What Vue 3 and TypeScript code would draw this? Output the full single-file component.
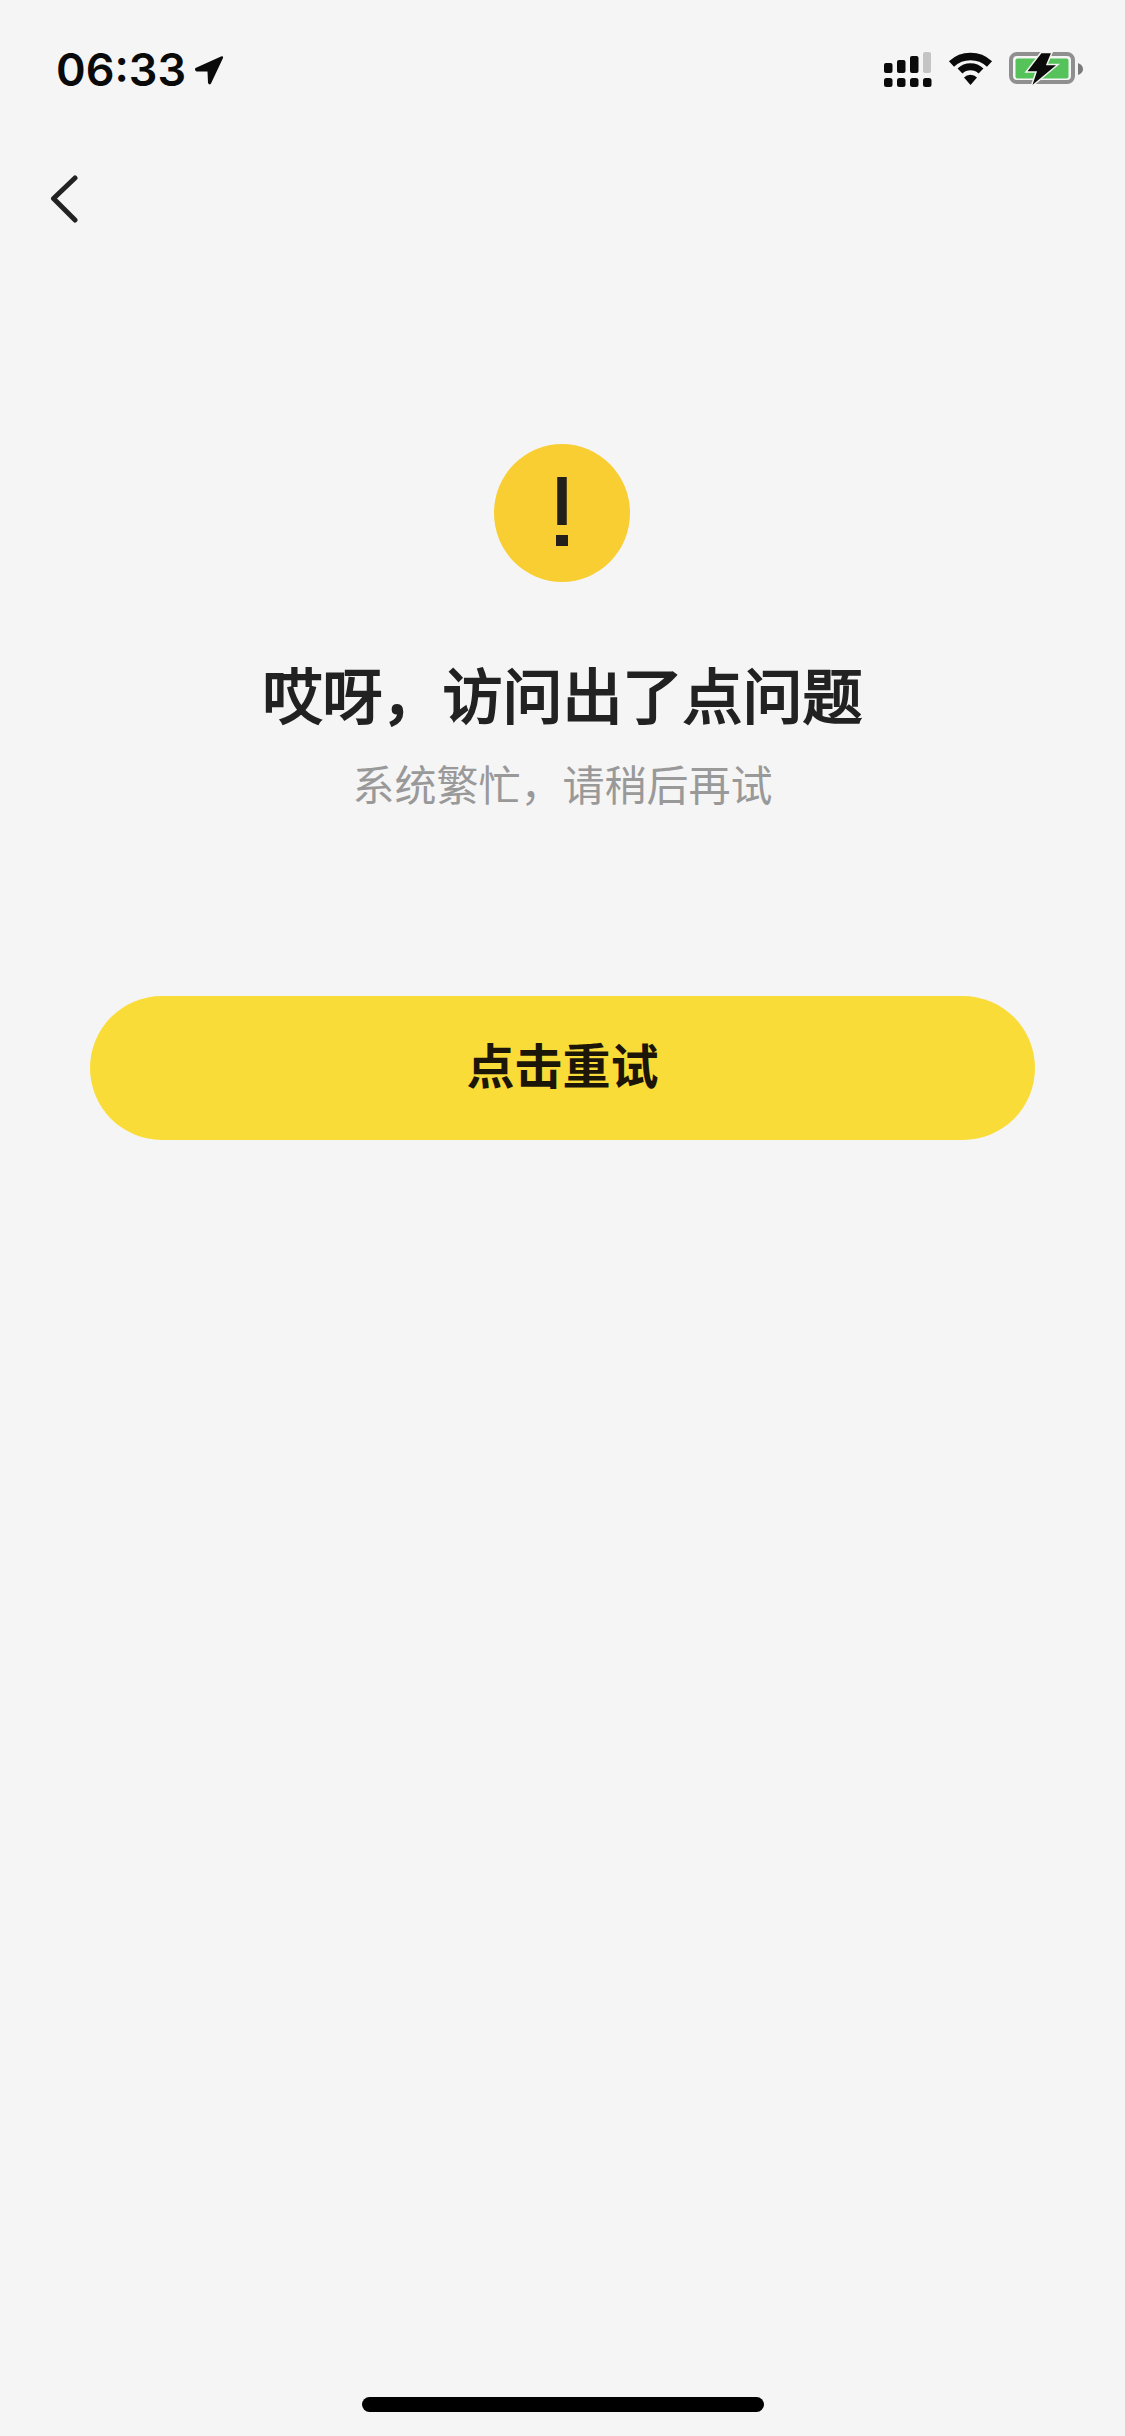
<template>
  <div class="page">
    <div class="status-bar">
      <div class="status-left">
        <span class="time">06:33</span>
        <svg class="loc" width="30" height="30" viewBox="0 0 30 30">
          <path d="M1.500 13 L27 1.500 Q29.500 0.500 29 3 L17 28.500 Q15.500 30.500 14 28 L13.500 16.500 L2.500 16.500 Q0 15 1.500 13 Z" fill="#0a0a0a" />
        </svg>
      </div>
      <div class="status-right">
        <svg width="48" height="35" viewBox="0 0 48 35">
          <rect x="0" y="11" width="8.500" height="10" rx="2" fill="#0a0a0a" />
          <rect x="13" y="8" width="8.500" height="13" rx="2" fill="#0a0a0a" />
          <rect x="26" y="4" width="8.500" height="17" rx="2" fill="#0a0a0a" />
          <rect x="39" y="0" width="8" height="21" rx="2" fill="#c4c4c4" />
          <rect x="0" y="26" width="8.500" height="9" rx="2.500" fill="#0a0a0a" />
          <rect x="13" y="26" width="8.500" height="9" rx="2.500" fill="#0a0a0a" />
          <rect x="26" y="26" width="8.500" height="9" rx="2.500" fill="#0a0a0a" />
          <rect x="39" y="26" width="8.500" height="9" rx="2.500" fill="#0a0a0a" />
        </svg>
        <svg class="wifi" width="45" height="33" viewBox="0 0 45 33">
          <path d="M3.500 12 A28 28 0 0 1 41.500 12" fill="none" stroke="#0a0a0a" stroke-width="7.500" />
          <path d="M12 19 A15 15 0 0 1 33 19" fill="none" stroke="#0a0a0a" stroke-width="7" />
          <path d="M16 25.500 A9 9 0 0 1 29 25.500 L22.500 33 Z" fill="#0a0a0a" />
        </svg>
        <svg class="battery" width="74" height="35" viewBox="0 0 74 35">
          <rect x="2" y="2" width="62" height="28" rx="6" fill="none" stroke="#8f8f8f" stroke-width="4" />
          <rect x="6.500" y="6.500" width="53" height="20" rx="2" fill="#55c25a" />
          <path d="M69 11 Q74 13 74 17 Q74 21 69 23 Z" fill="#7a7a7a" />
          <path d="M32 0.500 L17 20 L27 20 L22 35 L49 12.500 L38 12.500 L43 0.500 Z" fill="#0a0a0a" stroke="#f2f5ee" stroke-width="1.500" />
        </svg>
      </div>
    </div>

    <div class="nav-bar">
      <svg width="28" height="48" viewBox="0 0 28 48">
        <path d="M25 3 L3.500 23.500 L25 45" fill="none" stroke="#222" stroke-width="5" stroke-linecap="round" stroke-linejoin="round" />
      </svg>
    </div>

    <div class="content">
      <div class="alert-circle">
        <svg width="12" height="69" viewBox="0 0 12 69">
          <rect x="1.250" y="0" width="9.500" height="48" fill="#231f1a" />
          <rect x="0" y="58" width="12" height="11" fill="#231f1a" />
        </svg>
      </div>
      <div class="title">哎呀，访问出了点问题</div>
      <div class="subtitle">系统繁忙，请稍后再试</div>
      <button class="retry-btn">点击重试</button>
    </div>

    <div class="home-indicator"></div>
  </div>
</template>

<script setup lang="ts">
</script>

<style>
html, body { margin: 0; background: #f5f5f5; }
</style>

<style scoped>
.page {
  display: flex;
  flex-direction: column;
  width: 1125px;
  height: 2436px;
  overflow: hidden;
  background: #f5f5f5;
  font-family: "Liberation Sans", "Noto Sans CJK SC", sans-serif;
}

.status-bar {
  display: flex;
  align-items: center;
  justify-content: space-between;
  height: 35px;
  padding: 52px 42px 0 56px;
}
.status-left { display: flex; align-items: center; gap: 10px; }
.time { width: 128px; font-family: Inter, "Liberation Sans", sans-serif; font-size: 45px; font-weight: 600; line-height: 35px; color: #0a0a0a; }
.status-right { display: flex; align-items: flex-start; gap: 16px; }

.nav-bar {
  display: flex;
  align-items: center;
  height: 48px;
  margin-top: 88px;
  padding-left: 50px;
}

.content {
  display: flex;
  flex-direction: column;
  align-items: center;
  padding-top: 221px;
}

.alert-circle {
  display: flex;
  align-items: center;
  justify-content: center;
  box-sizing: border-box;
  width: 136px;
  height: 138px;
  margin-right: 1px;
  padding-bottom: 3px;
  border-radius: 50%;
  background: #f8ce33;
}

.title {
  margin-top: 76px;
  font-family: "Noto Sans CJK SC", sans-serif;
  font-size: 60px;
  font-weight: 400;
  -webkit-text-stroke: 2px #222;
  line-height: 70px;
  color: #222;
}

.subtitle {
  margin-top: 27px;
  font-family: "Noto Sans CJK SC", sans-serif;
  font-size: 42px;
  line-height: 56px;
  color: #999;
}

.retry-btn {
  width: 945px;
  height: 144px;
  margin-top: 185px;
  padding: 0 0 10px;
  border: none;
  border-radius: 72px;
  background: #fadc38;
  font-family: "Noto Sans CJK SC", sans-serif;
  font-size: 48px;
  font-weight: 700;
  color: #1c1608;
}

.home-indicator {
  width: 402px;
  height: 15px;
  margin: auto auto 24px;
  border-radius: 8px;
  background: #000;
}
</style>
